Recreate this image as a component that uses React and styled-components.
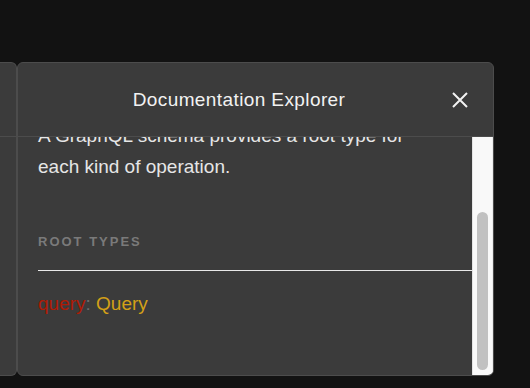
import React, { useLayoutEffect, useRef } from "react";
import styled, { createGlobalStyle } from "styled-components";

const GlobalStyle = createGlobalStyle`
  html, body {
    margin: 0;
    padding: 0;
    background: #121212;
    font-family: "Liberation Sans", Arial, sans-serif;
  }
`;

const Page = styled.div`
  display: flex;
  align-items: flex-start;
  padding-top: 62px;
  height: 388px;
  box-sizing: border-box;
`;

const SidePane = styled.div`
  width: 17px;
  height: 314px;
  box-sizing: border-box;
  background: #3b3b3b;
  border: 1px solid #4c4c4c;
  border-left: none;
  border-radius: 0 6px 6px 0;
`;

const SideHeader = styled.div`
  height: 74px;
  box-sizing: border-box;
  border-bottom: 1px solid #4c4c4c;
`;

const Explorer = styled.section`
  width: 477px;
  height: 314px;
  box-sizing: border-box;
  background: #3b3b3b;
  border: 1px solid #4c4c4c;
  border-radius: 6px;
  display: flex;
  flex-direction: column;
  overflow: hidden;
`;

const Header = styled.header`
  flex: none;
  height: 74px;
  box-sizing: border-box;
  border-bottom: 1px solid #4c4c4c;
  display: flex;
  align-items: center;
  padding: 0 13px 0 20px;
`;

const Title = styled.h2`
  flex: 1;
  margin: 0;
  text-align: center;
  font-size: 19px;
  font-weight: 400;
  letter-spacing: 0.4px;
  color: #f2f2f2;
`;

const CloseButton = styled.button`
  width: 40px;
  height: 40px;
  padding: 0;
  border: none;
  background: none;
  display: flex;
  align-items: center;
  justify-content: center;
  cursor: pointer;
`;

const Body = styled.div`
  flex: 1;
  min-height: 0;
  display: flex;
`;

const Scroller = styled.div`
  flex: 1;
  overflow: hidden;
  padding: 82px 0 56px 20px;
  box-sizing: border-box;
`;

const ScrollTrack = styled.div`
  flex: none;
  width: 21px;
  box-sizing: border-box;
  padding: 5px;
  display: flex;
  flex-direction: column;
  justify-content: flex-end;
  background: #f9f9f9;
  box-shadow: inset 1px 0 0 #e4e4e4, inset -1px 0 0 #ececec;
`;

const ScrollThumb = styled.div`
  height: 158px;
  border-radius: 6px;
  background: #c1c1c1;
`;

const Description = styled.p`
  margin: 0 45px 50px 0;
  font-size: 19px;
  line-height: 31px;
  color: #e6e6e6;
`;

const SectionTitle = styled.div`
  font-size: 13px;
  font-weight: 700;
  letter-spacing: 2px;
  line-height: 20px;
  color: #7a7a7a;
  padding-bottom: 18px;
  border-bottom: 1px solid #e8e8e8;
  margin-bottom: 17px;
`;

const FieldRow = styled.div`
  font-size: 19px;
  line-height: 31px;
`;

const Token = styled.span`
  color: ${(p) => p.$color};
`;

export default function App() {
  const scrollRef = useRef(null);

  useLayoutEffect(() => {
    const el = scrollRef.current;
    if (el) el.scrollTop = el.scrollHeight;
  }, []);

  return (
    <>
      <GlobalStyle />
      <Page>
        <SidePane>
          <SideHeader />
        </SidePane>
        <Explorer>
          <Header>
            <Title>Documentation Explorer</Title>
            <CloseButton aria-label="Close">
              <svg width="18" height="18" viewBox="0 0 18 18">
                <path
                  d="M2 2 L16 16 M16 2 L2 16"
                  stroke="#f2f2f2"
                  strokeWidth="2"
                  fill="none"
                />
              </svg>
            </CloseButton>
          </Header>
          <Body>
            <Scroller ref={scrollRef}>
              <Description>
                A GraphQL schema provides a root type for each kind of
                operation.
              </Description>
              <SectionTitle>ROOT TYPES</SectionTitle>
              <FieldRow>
                <Token $color="#b11a04">query</Token>
                <Token $color="#6e6e6e">: </Token>
                <Token $color="#d4a017">Query</Token>
              </FieldRow>
            </Scroller>
            <ScrollTrack>
              <ScrollThumb />
            </ScrollTrack>
          </Body>
        </Explorer>
      </Page>
    </>
  );
}
